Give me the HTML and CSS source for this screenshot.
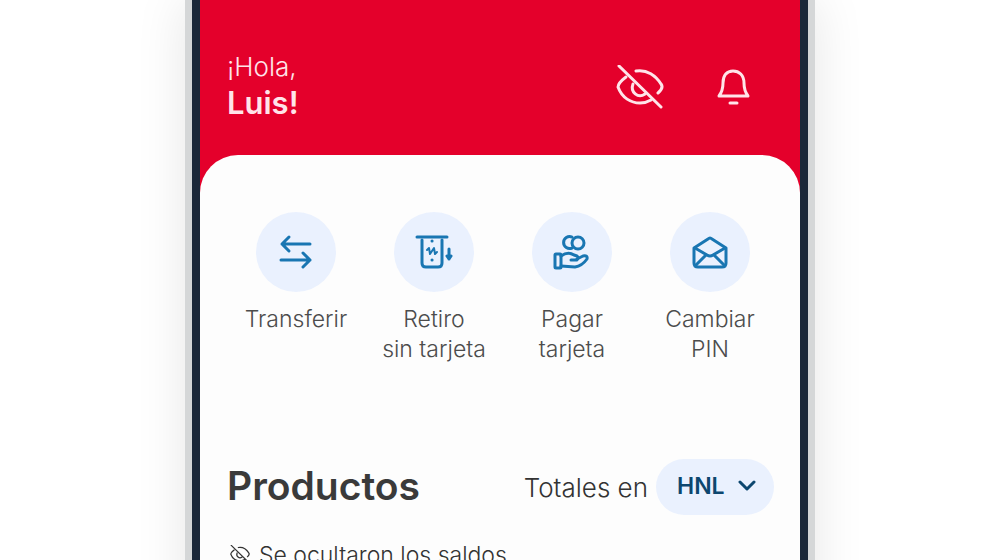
FILE: index.html
```html
<!DOCTYPE html>
<html lang="es">
<head>
    <meta charset="UTF-8">
    <meta name="viewport" content="width=device-width, initial-scale=1.0">
    <title>Inicio - Banca Móvil</title>
    <link rel="stylesheet" href="styles.css">
</head>
<body>

<div class="phone">
    <div class="screen">
        <header class="header">
            <h1 class="greeting">¡Hola, <strong>Luis!</strong></h1>
            <div class="header-actions">
                <button type="button" class="icon-button" aria-label="Ocultar saldos">
                    <svg width="48" height="48" viewBox="0 0 48 48">
                        <path d="M20 6C31 4 40 11 45 19Q48 23 42 28"/>
                        <path d="M10 12Q2 18 2 22C6 33 15 38 24 38Q30 38 35 35"/>
                        <path d="M17 19C14 27 22 34 29 29"/>
                        <path d="M3 1L45 42"/>
                    </svg>
                </button>
                <button type="button" class="icon-button" aria-label="Notificaciones">
                    <svg width="48" height="48" viewBox="0 0 48 48">
                        <path d="M10 31C13 27 14 24 14 18C14 10 18 6 24 6S35 10 35 18C35 24 36 27 39 31Z"/>
                        <path d="M21 38H28"/>
                    </svg>
                </button>
            </div>
        </header>

        <main class="sheet">
            <nav class="actions">
                <button type="button" class="action">
                    <span class="action-icon">
                        <svg width="40" height="40" viewBox="0 0 40 40">
                            <path d="M34 12H6M13 5L6 12L13 19"/>
                            <path d="M5 28H34M27 21L34 28L27 35"/>
                        </svg>
                    </span>
                    Transferir
                </button>
                <button type="button" class="action">
                    <span class="action-icon">
                        <svg width="40" height="40" viewBox="0 0 40 40">
                            <path d="M3 5H33"/>
                            <path d="M8 8V31Q8 35 12 35H24Q28 35 28 31V8"/>
                            <path class="thin" d="M13 18L15 16L16 22L20 16L21 22L23 20"/>
                            <path d="M18 9H18.1M18 28H18.1"/>
                            <path d="M35 17V27M33 24L35 27L37 24"/>
                        </svg>
                    </span>
                    Retiro<br>sin tarjeta
                </button>
                <button type="button" class="action">
                    <span class="action-icon">
                        <svg width="40" height="40" viewBox="0 0 40 40">
                            <path d="M20 5A6 6 0 1 0 20 16"/>
                            <circle cx="26" cy="11" r="6"/>
                            <rect x="3" y="22" width="6" height="14" rx="1"/>
                            <path d="M9 24Q16 19 22 23L25 24Q27 25 25 28L19 28"/>
                            <path d="M25 27L31 24Q36 23 35 27Q30 34 23 35L9 34"/>
                        </svg>
                    </span>
                    Pagar<br>tarjeta
                </button>
                <button type="button" class="action">
                    <span class="action-icon">
                        <svg width="40" height="40" viewBox="0 0 40 40">
                            <path d="M4 16L18 7Q20 5 22 7L36 16V31Q36 35 32 35H8Q4 35 4 31Z"/>
                            <path d="M5 16L17 23Q20 25 23 23L35 16"/>
                            <path d="M6 33L16 23M34 33L24 23"/>
                        </svg>
                    </span>
                    Cambiar<br>PIN
                </button>
            </nav>

            <section class="products">
                <div class="products-head">
                    <h2>Productos</h2>
                    <div class="totals">
                        <label for="currency">Totales en</label>
                        <span class="currency">
                            <select id="currency">
                                <option>HNL</option>
                                <option>USD</option>
                            </select>
                            <svg width="18" height="12" viewBox="0 0 18 12">
                                <path d="M2 2L9 9L16 2"/>
                            </svg>
                        </span>
                    </div>
                </div>
                <p class="notice">
                    <svg width="20" height="20" viewBox="0 0 48 48">
                        <path d="M20 6C31 4 40 11 45 19Q48 23 42 28"/>
                        <path d="M10 12Q2 18 2 22C6 33 15 38 24 38Q30 38 35 35"/>
                        <path d="M17 19C14 27 22 34 29 29"/>
                        <path d="M3 1L45 42"/>
                    </svg>
                    Se ocultaron los saldos
                </p>
            </section>
        </main>
    </div>
</div>

</body>
</html>
```
FILE: styles.css
```css
* {
    box-sizing: border-box;
}

body {
    font-family: Inter, "Open Sans", sans-serif;
    margin: 0;
    background-color: #fff;
    height: 100vh;
    overflow: hidden;
}

svg {
    fill: none;
    stroke: currentColor;
    stroke-width: 3;
    stroke-linecap: round;
    stroke-linejoin: round;
}

button {
    font-family: inherit;
    border: none;
    background: none;
    padding: 0;
    cursor: pointer;
}

/* phone frame */
.phone {
    width: 63%;
    min-width: 600px;
    min-height: 100vh;
    margin: 0 auto;
    border: solid #d5d7d8;
    border-width: 0 7px;
    box-shadow: 0 0 48px rgba(0, 0, 0, 0.1);
}

.screen {
    min-height: 100vh;
    border: solid #1c293a;
    border-width: 0 8px;
    background-color: #e4002b;
}

.header {
    display: flex;
    justify-content: space-between;
    align-items: flex-end;
    padding: 49px 43px 34px 27px;
    color: #ffe4e9;
}

.greeting {
    margin: 0;
    font-size: 26px;
    font-weight: 300;
    line-height: 36px;
}

.greeting strong {
    display: block;
    font-size: 31px;
    font-weight: 600;
}

.header-actions {
    display: flex;
    gap: 45px;
    padding-bottom: 8px;
}

.icon-button {
    color: inherit;
    height: 48px;
}

/* white content area */
.sheet {
    min-height: 100vh;
    padding: 57px 21px 0 27px;
    border-radius: 38px 38px 0 0;
    background-color: #fdfdfd;
}

.actions {
    display: grid;
    grid-template-columns: repeat(4, 1fr);
    align-items: start;
}

.action {
    font-size: 23px;
    font-weight: 300;
    line-height: 30px;
    color: #4c4c4c;
}

.action-icon {
    display: flex;
    align-items: center;
    justify-content: center;
    width: 80px;
    height: 80px;
    margin: 0 auto 12px;
    border-radius: 50%;
    background-color: #eaf1fe;
    color: #1976b2;
}

.action-icon .thin {
    stroke-width: 2;
}

.products {
    padding-top: 95px;
}

.products-head {
    display: flex;
    justify-content: space-between;
    align-items: center;
    padding-right: 5px;
}

.products h2 {
    margin: 0;
    padding-bottom: 4px;
    font-size: 39px;
    font-weight: 600;
    color: #3a3a3a;
}

.totals {
    display: flex;
    align-items: center;
    gap: 8px;
    font-size: 26px;
    font-weight: 300;
    color: #333;
}

.currency {
    position: relative;
    color: #0d476f;
}

.currency select {
    appearance: none;
    display: block;
    height: 56px;
    padding: 0 48px 2px 21px;
    border: none;
    border-radius: 28px;
    background-color: #eaf1fe;
    color: inherit;
    font-family: inherit;
    font-size: 23px;
    font-weight: 600;
}

.currency svg {
    position: absolute;
    right: 18px;
    top: 21px;
    pointer-events: none;
}

.notice {
    display: flex;
    align-items: center;
    gap: 9px;
    margin: 24px 0 0 3px;
    font-size: 23px;
    font-weight: 300;
    line-height: 32px;
    color: #333;
}
```
